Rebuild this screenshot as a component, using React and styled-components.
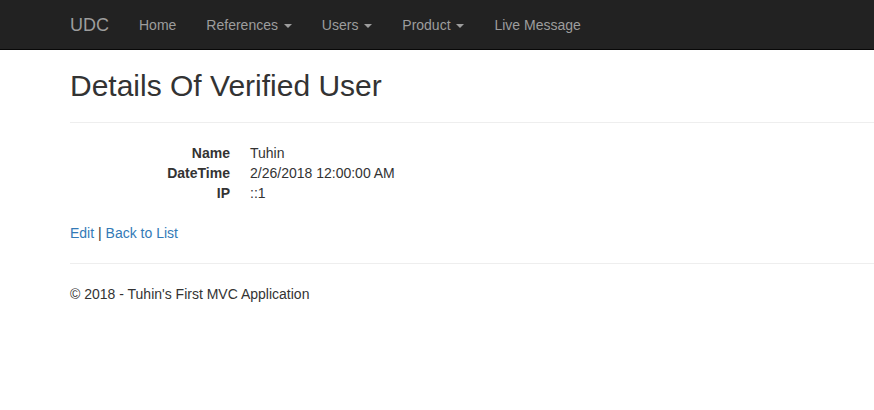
import React from 'react';
import styled, {createGlobalStyle} from 'styled-components';

const GlobalStyle = createGlobalStyle`
  * { box-sizing: border-box; }
  body {
    margin: 0;
    font-family: "Liberation Sans", Arial, Helvetica, sans-serif;
    font-size: 14px;
    line-height: 1.42857143;
    color: #333;
    background: #fff;
  }
`;

const Navbar = styled.nav`
  height: 50px;
  background: #222;
  border-bottom: 1px solid #080808;
  display: flex;
  align-items: flex-start;
  padding-left: 55px;
`;

const Brand = styled.a`
  padding: 15px 15px;
  font-size: 18px;
  line-height: 20px;
  height: 50px;
  color: #9d9d9d;
  text-decoration: none;
`;

const NavList = styled.ul`
  display: flex;
  margin: 0;
  padding: 0;
  list-style: none;
`;

const NavLink = styled.a`
  display: block;
  padding: 15px;
  line-height: 20px;
  color: #9d9d9d;
  text-decoration: none;
`;

const Caret = styled.span`
  display: inline-block;
  width: 0;
  height: 0;
  margin-left: 2px;
  vertical-align: middle;
  border-top: 4px solid;
  border-right: 4px solid transparent;
  border-left: 4px solid transparent;
`;

const Body = styled.div`
  padding-left: 70px;
`;

const Title = styled.h2`
  margin: 19px 0 10px;
  font-size: 30px;
  font-weight: 500;
  line-height: 1.1;
`;

const Rule = styled.hr`
  margin: 20px 0;
  border: 0;
  border-top: 1px solid #eee;
`;

const DetailList = styled.dl`
  display: grid;
  grid-template-columns: 160px 1fr;
  column-gap: 20px;
  margin: 0 0 20px;
  line-height: 20px;
`;

const Term = styled.dt`
  font-weight: bold;
  text-align: right;
`;

const Value = styled.dd`
  margin: 0;
`;

const Para = styled.p`
  margin: 0 0 10px;
`;

const Link = styled.a`
  color: #337ab7;
  text-decoration: none;
`;

const items = [
    {label: 'Home'},
    {label: 'References', dropdown: true},
    {label: 'Users', dropdown: true},
    {label: 'Product', dropdown: true},
    {label: 'Live Message'},
];

const details = [
    ['Name', 'Tuhin'],
    ['DateTime', '2/26/2018 12:00:00 AM'],
    ['IP', '::1'],
];

const App = () => {
    return (
        <>
        <GlobalStyle />
        <Navbar>
            <Brand href="#">UDC</Brand>
            <NavList>
                {items.map(item => (
                    <li key={item.label}>
                        <NavLink href="#">
                            {item.label}
                            {item.dropdown && <> <Caret /></>}
                        </NavLink>
                    </li>
                ))}
            </NavList>
        </Navbar>
        <Body>
            <Title>Details Of Verified User</Title>
            <Rule />
            <DetailList>
                {details.map(([term, value]) => (
                    <React.Fragment key={term}>
                        <Term>{term}</Term>
                        <Value>{value}</Value>
                    </React.Fragment>
                ))}
            </DetailList>
            <Para>
                <Link href="#">Edit</Link> | <Link href="#">Back to List</Link>
            </Para>
            <Rule />
            <Para>&copy; 2018 - Tuhin's First MVC Application</Para>
        </Body>
        </>
    )
};
export default App;
